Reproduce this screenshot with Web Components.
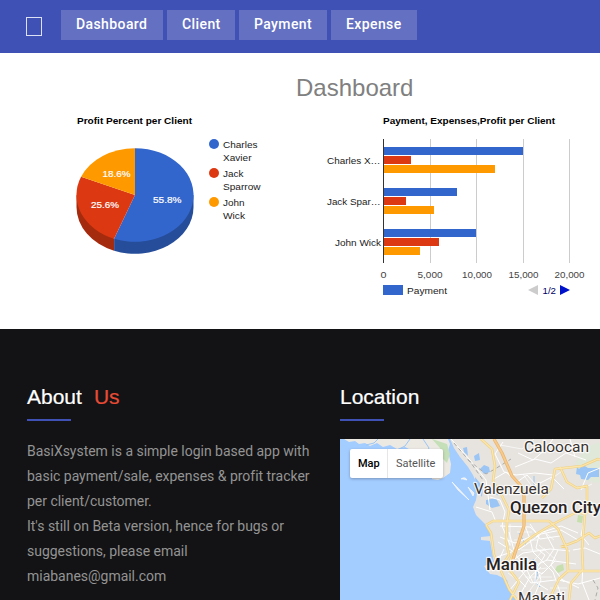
<!DOCTYPE html>
<html lang="en"><head><meta charset="utf-8"><title>Dashboard</title>
<style>html,body{margin:0;width:600px;height:600px;overflow:hidden;background:#fff;font-family:Roboto,sans-serif}</style></head>
<body><app-page></app-page>
<script>
function define(name, html) {
  customElements.define(name, class extends HTMLElement {
    constructor() {
      super();
      this.attachShadow({mode: 'open'}).innerHTML = html;
      this.shadowRoot.querySelectorAll('text[textLength]').forEach(t => t.setAttribute('lengthAdjust', 'spacingAndGlyphs'));
    }
  });
}

define('nav-button', `<style>:host{display:block;box-sizing:border-box;height:30px;padding:0 15px;background:#6470c1;color:#fff;font:500 14px/28px Roboto,sans-serif;letter-spacing:.4px;white-space:nowrap}</style><slot></slot>`);

define('top-bar', `<style>:host{display:flex;box-sizing:border-box;height:53px;padding:10px 0 0 26px;background:#3f51b5}
i{box-sizing:border-box;width:16px;height:19px;margin:7px 19px 0 0;border:1px solid #dde1f5}
nav{display:flex;gap:4px}</style><i></i><nav>
<nav-button style="width:102px">Dashboard</nav-button><nav-button style="width:68px">Client</nav-button><nav-button style="width:88px">Payment</nav-button><nav-button style="width:86px">Expense</nav-button></nav>`);

define('pie-chart', `<style>:host{display:block;width:220px;height:170px}svg{display:block;font:9.5px "Liberation Sans",Arial,sans-serif}</style>
<svg width="220" height="170" viewBox="60 105 220 170">
<text x="77" y="124" font-weight="bold" textLength="115">Profit Percent per Client</text>
<path d="M76.5 195V207A58.5 46.8 0 0 0 114.1 250.7V238.7Z" fill="#a52b0e"/>
<path d="M193.5 195V207A58.5 46.8 0 0 1 114.1 250.7V238.7Z" fill="#264d99"/>
<path d="M135 195V148.2A58.5 46.8 0 1 1 114.1 238.7Z" fill="#3366cc"/>
<path d="M135 195L114.1 238.7A58.5 46.8 0 0 1 81.1 176.7Z" fill="#dc3912"/>
<path d="M135 195L81.1 176.7A58.5 46.8 0 0 1 135 148.2Z" fill="#ff9900"/>
<g fill="#fff" stroke="#fff" stroke-width=".2"><text x="153" y="203" textLength="28.5">55.8%</text><text x="91" y="208" textLength="28">25.6%</text><text x="102.5" y="177" textLength="28">18.6%</text></g>
<circle cx="214" cy="144" r="5" fill="#3366cc"/><circle cx="214" cy="173" r="5" fill="#dc3912"/><circle cx="214" cy="202" r="5" fill="#ff9900"/>
<g fill="#222"><text x="223" y="148" textLength="34.5">Charles</text><text x="223" y="161" textLength="28.5">Xavier</text><text x="223" y="177" textLength="20.5">Jack</text><text x="223" y="190" textLength="37.5">Sparrow</text><text x="223" y="206" textLength="21.5">John</text><text x="223" y="219" textLength="22">Wick</text></g></svg>`);

define('bar-chart', `<style>:host{display:block;width:280px;height:200px}svg{display:block;font:9.5px "Liberation Sans",Arial,sans-serif}</style>
<svg width="280" height="200" viewBox="320 105 280 200">
<text x="383" y="124" font-weight="bold" textLength="172">Payment, Expenses,Profit per Client</text>
<g fill="#ccc"><path d="M430 139h1v124h-1zM476 139h1v124h-1zM523 139h1v124h-1zM569 139h1v124h-1z"/></g>
<path fill="#3366cc" d="M384 147h139v8h-139zM384 188h73v8h-73zM384 229h92v8h-92zM383 285h20v10h-20z"/>
<path fill="#dc3912" d="M384 156h27v8h-27zM384 197h22v8h-22zM384 238h55v8h-55z"/>
<path fill="#ff9900" d="M384 165h111v8h-111zM384 206h50v8h-50zM384 247h36v8h-36z"/>
<path fill="#333" d="M383 139h1v124h-1z"/>
<g fill="#222"><text x="327" y="164" textLength="53.5">Charles X…</text><text x="327" y="205" textLength="53.5">Jack Spar…</text><text x="335" y="246" textLength="46">John Wick</text><text x="407" y="294" textLength="40">Payment</text></g>
<g fill="#444"><text x="380.5" y="278" textLength="6">0</text><text x="417.5" y="278" textLength="25">5,000</text><text x="462" y="278" textLength="30">10,000</text><text x="508.5" y="278" textLength="30">15,000</text><text x="554.5" y="278" textLength="30">20,000</text></g>
<path d="M538 285v10l-10-5z" fill="#ccc"/><path d="M560 285v10l10-5z" fill="#0011cc"/><text x="542.5" y="294" fill="#006" textLength="13.5">1/2</text></svg>`);

define('dash-panel', `<style>:host{display:block;box-sizing:border-box;height:276px;background:#fff}
h1{margin:0;padding:20px 0 0 296px;height:32px;font:400 24px/30px "Liberation Sans",Arial,sans-serif;color:#808080}
div{display:flex;gap:40px;padding-left:60px}pie-chart,bar-chart{flex:none}</style><h1>Dashboard</h1><div><pie-chart></pie-chart><bar-chart></bar-chart></div>`);

define('section-title', `<style>:host{display:block;color:#fff;font:400 21px/26px "Liberation Sans",Arial,sans-serif;white-space:pre;-webkit-text-stroke:.2px}
::slotted(span){color:#e94b35;margin-left:12px}b{display:block;width:44px;height:2px;margin-top:9px;background:#3f51b5}</style><slot></slot><b></b>`);

define('area-map', `<style>:host{display:block;position:relative;width:260px;height:161px;overflow:hidden}svg{display:block}
.ctl{position:absolute;left:10px;top:10px;display:flex;height:29px;width:93px;background:#fff;border-radius:2px;box-shadow:0 1px 3px #0004;font:11px/29px Roboto,sans-serif;color:#565656}
.ctl b{box-sizing:border-box;width:38px;padding-left:8px;border-right:1px solid #e6e6e6;font-weight:500;color:#000}.ctl span{padding-left:8px}
text{font-family:Roboto,sans-serif;fill:#38332f;stroke:#fff;stroke-opacity:.75;stroke-width:2.5px;paint-order:stroke;stroke-linejoin:round}</style>
<svg width="260" height="161" viewBox="340 439 260 161">
<path fill="#a3ccff" d="M340 439h260v161H340z"/>
<path fill="#ece9e3" d="M344 439L349 442 355 441 359 444 365 443 370 446 377 443 383 447 390 445 397 449 405 447 413 451 424 450 432 455V479L438 480 443 478 450 473 451 464 448 451 450 444 448 439Z"/>
<path fill="#c5dfb8" d="M432 439L447 444 450 454 447 463 443 459 440 448Z"/>
<path fill="#e7e4df" d="M450 439H600V600H516L510 591 507 580 497 575 490 574 486 569 484 566 494 562 492 552 490 541 481 540V537L491 536 486 525 476 515 473 507 476 500 478 487 473 475 468 467 460 457 454 448Z"/>
<g fill="#e0e8da"><path d="M600 442L589 446 582 453 575 463 577 474 586 481 600 483Z"/><path fill="#c6dfad" d="M557 566l6-2 1 6-6 3-3-3zM578 515l5 1-1 7-5-1z"/></g>
<g fill="#9bc5f5"><path d="M577 467l2 2 4-4 5 3 11 0v9l-8 0-3 3-7-1-1-4-4-1zM474 456l5-3 1 7-5 1zM484 465l5 2 1 5-6 2-4-5zM486 500l10-2 4 8-8 2-6-4zM463 448l4-1 1 9-4-4z"/><path d="M475 477l8 10-1 10-6-9z"/></g>
<g fill="none" stroke="#9bc5f5" stroke-width="1"><path d="M378 439l-4 4-8 2M410 439l-5 7-8 4M423 439l6 9-4 7M534 476v9l-6 9M498 495l-9-5M533 559l5 15-3 7 5 6M519 533l7 12"/></g>
<path fill="#f0eee8" stroke="#fff" stroke-width=".6" d="M452 482l5 5 12 13-11-10zM461 479q4-3 6 1l-4-1zM468 487l6 6-1 3z"/>
<path fill="none" stroke="#fff" stroke-width="1" stroke-linejoin="round" d="M451 439L470 460 486 480 490 510M503 442l-8 12 9 18 12 3 19-2 18 2M518 453l15 7 12-10 8-11M515 467l20-8 16 4 15-10 20 7M494 479l12-7 11 10 10-7 9 10 16-8 12 12M490 497l10 3 5 12-3 14 8 19M476 507l16 5 4 10M500 526l30 1 9 8-3 13 9 7-8 13 4 12-8 19M497 557l23-8 21-15 20-4 17 10M505 566l18-13 27-4 20 2M500 537l15 6 22-9 24-8 17 7M492 571l14-10 22 4 14 9 13-13M509 591l17-21 21-10 29 4M517 600l13-23 11-10M509 532l6 22 12 16 6 13M524 523l6 16 3 13 20 20 8 23M530 524l10 15 20-3M552 523l-16 14M498 542l16 10M504 549l-6 13M514 575l12 12M520 569l11 14 24-3M529 559l-7 13M536 563l-1 19 13 8M558 550l-7 15 13 17M546 534l8 15-8 12M558 580l20 4 22-6M573 550l12-2 15 6M579 588l-18-9M583 566l-1 16 7 18M581 490l7-17 12-5M580 500l10 10 10 2M585 518l-4 17 8 10M570 439l5 18"/>
<path fill="none" stroke="#fff" stroke-width=".8" opacity=".8" d="M510 524v22M517 532h15M514 540h24M521 550h25M539 545l17 15M510 565l14-6M508 573l11 8M525 577h27M545 548l-16 18M530 570l17-2M543 572l-18 25M550 588h17M542 530l12 10M500 445l22 4 12-10M523 474l10 14M550 480l12-9M592 484l-11 5"/>
<path fill="none" stroke="#aaa" stroke-dasharray="4 3" d="M468 460l18 14 9-5 16-10M454 443l17 20 12 17M593 580l5 8-3 12"/>
<g fill="none" stroke-linejoin="round"><path stroke="#efd084" stroke-width="2.5" d="M481 439l11 10 3 17-2 15 8 13 8 16-2 13-1 18 3 14-6 9M486 525l7-4h56l9 8 9 20 1 22-9 8-10 21M508 565l7-15 18-14 20-12 24-12 8 2-3 35 1 20-12 14-2 17M600 460l-2-1-16 7-27 3-4 20-9 9M560 467l7 15 10 6 10-2v28M486 525l5 8 3 22 15 34 8 11M568 571h32M561 547l16-6 12-8 6 5 5-2M510 600l9-18M519 582l-13-17"/>
<path stroke="#fbe6ad" stroke-width="1.3" d="M481 439l11 10 3 17-2 15 8 13 8 16-2 13-1 18 3 14-6 9M486 525l7-4h56l9 8 9 20 1 22-9 8-10 21M508 565l7-15 18-14 20-12 24-12 8 2-3 35 1 20-12 14-2 17M600 460l-2-1-16 7-27 3-4 20-9 9M560 467l7 15 10 6 10-2v28M486 525l5 8 3 22 15 34 8 11M568 571h32M561 547l16-6 12-8 6 5 5-2M510 600l9-18M519 582l-13-17"/>
<path stroke="#e9b46c" stroke-width="3.2" d="M494 439l8 14 10 23 9 10 3 10v30l-11 33"/><path stroke="#f7c98b" stroke-width="1.8" d="M494 439l8 14 10 23 9 10 3 10v30l-11 33"/></g>
<text x="524" y="452" font-size="15.5" textLength="65">Caloocan</text><text x="474" y="494" font-size="15.5" textLength="75">Valenzuela</text>
<g font-weight="500"><text x="510" y="513" font-size="17" textLength="91" style="fill:#27221f">Quezon City</text><text x="486" y="570" font-size="17" textLength="51" style="fill:#27221f">Manila</text></g>
<text x="518" y="603" font-size="15.5" textLength="47">Makati</text></svg>
<div class="ctl"><b>Map</b><span>Satellite</span></div>`);

define('page-footer', `<style>:host{display:flex;box-sizing:border-box;height:271px;padding:55px 0 0 27px;background:#131315;gap:23px}
section{flex:none;width:290px}p{margin:18px 0 0;color:#949494;font:400 14px/25px Roboto,sans-serif;letter-spacing:-.02px;white-space:nowrap}area-map{margin-top:18px}</style>
<section><section-title>About<span>Us</span></section-title><p>BasiXsystem is a simple login based app with<br>basic payment/sale, expenses &amp; profit tracker<br>per client/customer.<br>It's still on Beta version, hence for bugs or<br>suggestions, please email<br>miabanes@gmail.com</p></section>
<section><section-title>Location</section-title><area-map></area-map></section>`);

define('app-page', `<style>:host{display:block;width:600px;height:600px;overflow:hidden}</style><top-bar></top-bar><dash-panel></dash-panel><page-footer></page-footer>`);
</script></body></html>
